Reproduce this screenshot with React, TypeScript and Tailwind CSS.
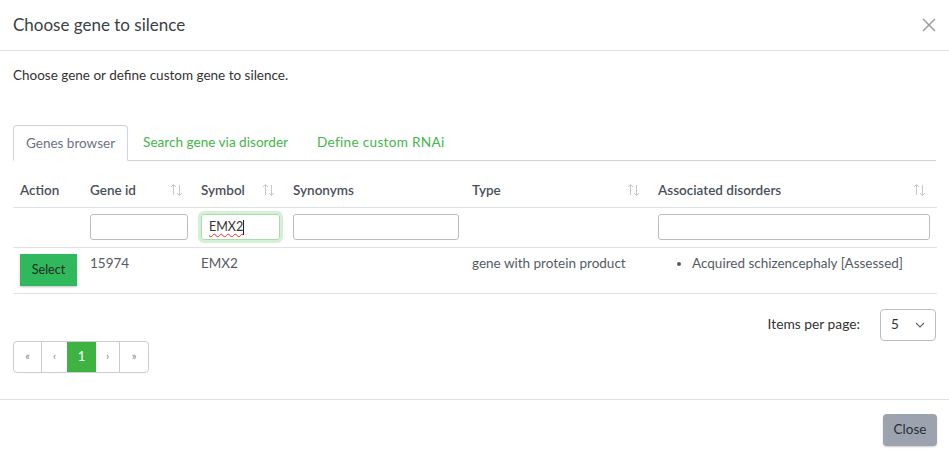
import React from 'react';

const SortIcon = () => (
  <svg width="13" height="14" viewBox="0 0 13 14" className="shrink-0">
    <g stroke="#c4c8cf" strokeWidth="1" fill="none">
      <path d="M3.5 12V1.5M1 4l2.5-2.5L6 4" />
      <path d="M9.5 2v10.5M7 10l2.5 2.5L12 10" />
    </g>
  </svg>
);

const columns = [
  { label: 'Action', w: 'w-[70px]', sort: false },
  { label: 'Gene id', w: 'w-[111px]', sort: true },
  { label: 'Symbol', w: 'w-[92px]', sort: true },
  { label: 'Synonyms', w: 'w-[179px]', sort: false },
  { label: 'Type', w: 'w-[186px]', sort: true },
  { label: 'Associated disorders', w: 'w-[286px]', sort: true },
];

const inputCls = 'h-[26px] border border-[#b9bec6] rounded-[3px] bg-white';

export default function App() {
  return (
    <div className="w-[949px] h-[464px] bg-white text-[#333] overflow-hidden font-['Lato',sans-serif]">
      {/* header */}
      <div className="h-[51px] flex items-center justify-between pl-[13px] pr-[12px] border-b border-[#dee2e6]">
        <h5 className="text-[17px] text-[#3a3f44]">Choose gene to silence</h5>
        <svg width="16" height="16" viewBox="0 0 16 16">
          <path d="M2 2l12 12M14 2L2 14" stroke="#9a9ea4" strokeWidth="1.5" />
        </svg>
      </div>

      {/* body */}
      <div className="px-[13px] pt-[14px]">
        <p className="text-[13.5px] leading-[20px] text-[#333]">Choose gene or define custom gene to silence.</p>

        {/* tabs */}
        <div className="mt-[39px] flex items-end border-b border-[#ced4da] text-[13.5px]">
          <div className="h-[36px] mb-[-1px] px-[12px] flex items-center border border-[#ced4da] border-b-white rounded-t-[4px] bg-white text-[#6b7380]">
            Genes browser
          </div>
          <div className="h-[36px] px-[15px] flex items-center text-[#45b649] text-[13.6px]">Search gene via disorder</div>
          <div className="h-[36px] px-[14px] flex items-center text-[#45b649] text-[13.6px] tracking-[0.3px]">Define custom RNAi</div>
        </div>

        {/* table */}
        <table className="mt-[13px] w-[924px] table-fixed border-collapse text-[13.5px]">
          <thead>
            <tr className="border-b border-[#dee2e6]">
              {columns.map((c) => (
                <th key={c.label} className={`${c.w} h-[33px] px-[7px] text-left font-semibold text-[#4a5059]`}>
                  <div className="flex items-center justify-between pr-[4px]">
                    <span>{c.label}</span>
                    {c.sort && <SortIcon />}
                  </div>
                </th>
              ))}
            </tr>
          </thead>
          <tbody>
            <tr className="border-b border-[#dee2e6]">
              <td className="h-[40px]"></td>
              <td className="px-[7px]"><div className={`${inputCls} w-[98px]`}></div></td>
              <td className="px-[7px]">
                <div className="h-[26px] w-[79px] border border-[#a8dca8] rounded-[3px] shadow-[0_0_0_3px_rgba(69,182,73,0.22)] flex items-center pl-[7px] text-[12.5px] text-[#333]">
                  <span className="underline decoration-wavy decoration-[#e03030] decoration-1 underline-offset-2">EMX2</span>
                  <span className="w-px h-[15px] bg-[#222]"></span>
                </div>
              </td>
              <td className="px-[7px]"><div className={`${inputCls} w-[166px]`}></div></td>
              <td></td>
              <td className="px-[7px]"><div className={`${inputCls} w-[272px]`}></div></td>
            </tr>
            <tr className="border-b border-[#dee2e6] align-top text-[#555b63]">
              <td className="h-[46px] px-[7px] pt-[6px]">
                <button className="w-[57px] h-[32px] pt-[2px] bg-[#2fb85c] text-[#1e2a22] text-[12.5px] shadow-[0_1px_2px_rgba(0,0,0,0.25)]">Select</button>
              </td>
              <td className="px-[7px] pt-[6px] leading-[18px]">15974</td>
              <td className="px-[7px] pt-[6px] leading-[18px]">EMX2</td>
              <td className="px-[7px] pt-[6px]"></td>
              <td className="px-[7px] pt-[6px] leading-[18px]">gene with protein product</td>
              <td className="px-[7px] pt-[6px] leading-[18px]">
                <ul className="list-disc pl-[34px]">
                  <li>Acquired schizencephaly [Assessed]</li>
                </ul>
              </td>
            </tr>
          </tbody>
        </table>

        {/* items per page */}
        <div className="mt-[15px] flex justify-end items-center">
          <span className="text-[13.8px] text-[#333] mr-[20px]">Items per page:</span>
          <div className="w-[56px] h-[32px] border border-[#b9bec6] rounded-[4px] flex items-center justify-between px-[10px] text-[13.5px] text-[#333]">
            <span>5</span>
            <svg width="10" height="6" viewBox="0 0 10 6">
              <path d="M1 1l4 4 4-4" stroke="#666" strokeWidth="1.2" fill="none" />
            </svg>
          </div>
        </div>

        {/* pagination */}
        <div className="flex">
          <div className="flex h-[32px] border border-[#c9cdd3] rounded-[4px] overflow-hidden text-[11px] text-[#7d848e]">
            <div className="w-[28px] flex items-center justify-center border-r border-[#c9cdd3]">«</div>
            <div className="w-[25px] flex items-center justify-center">‹</div>
            <div className="w-[29px] flex items-center justify-center bg-[#3fb342] text-white text-[13px]">1</div>
            <div className="w-[24px] flex items-center justify-center border-r border-[#c9cdd3]">›</div>
            <div className="w-[28px] flex items-center justify-center">»</div>
          </div>
        </div>
      </div>

      {/* footer */}
      <div className="mt-[26px] border-t border-[#dee2e6] flex justify-end pr-[12px] pt-[14px]">
        <button className="w-[54px] h-[32px] bg-[#9ca3ae] rounded-[4px] text-[13.5px] text-[#2a2f36] shadow-[0_1px_2px_rgba(0,0,0,0.2)]">Close</button>
      </div>
    </div>
  );
}
